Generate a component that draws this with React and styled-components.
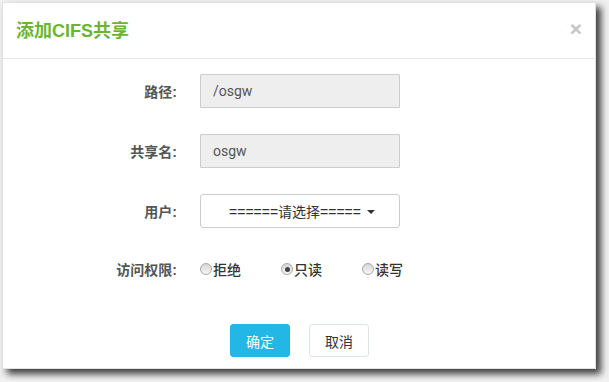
import React, { useState } from 'react';
import styled, { createGlobalStyle } from 'styled-components';

const GlobalStyle = createGlobalStyle`
  html, body {
    margin: 0;
    padding: 0;
    background: #f1f1f1;
    font-family: "Liberation Sans", "Noto Sans CJK SC", sans-serif;
  }
`;

const Page = styled.div`
  width: 609px;
  height: 382px;
  padding: 2px 0 0 2px;
  box-sizing: border-box;
  overflow: hidden;
`;

const Modal = styled.div`
  width: 594px;
  height: 367px;
  background: #fff;
  border: 1px solid #e2e2e2;
  box-sizing: border-box;
  box-shadow: 5px 5px 7px rgba(0, 0, 0, 0.75);
  display: flex;
  flex-direction: column;
`;

const Header = styled.div`
  height: 56px;
  border-bottom: 1px solid #e5e5e5;
  display: flex;
  align-items: center;
  justify-content: space-between;
  padding: 0 13px 0 13px;
  box-sizing: border-box;
`;

const Title = styled.h4`
  margin: 0;
  font-size: 18px;
  font-weight: 700;
  color: #6cb52f;
  line-height: 1;
`;

const Close = styled.button`
  border: none;
  background: none;
  padding: 0;
  font-size: 21px;
  font-weight: 700;
  line-height: 1;
  color: #c4c4c4;
  cursor: pointer;
  margin-top: -4px;
  font-family: "Liberation Sans", sans-serif;
`;

const Body = styled.div`
  padding-top: 15px;
  display: flex;
  flex-direction: column;
  gap: 26px;
`;

const Row = styled.div`
  display: grid;
  grid-template-columns: 174px max-content;
  column-gap: 23px;
  align-items: center;
  height: ${({ $h }) => $h || 34}px;
`;

const Label = styled.label`
  text-align: right;
  font-size: 14px;
  font-weight: 700;
  color: #555;
`;

const Input = styled.input`
  width: 200px;
  height: 34px;
  box-sizing: border-box;
  border: 1px solid #ccc;
  border-radius: 1px;
  background: #eee;
  padding: 0 12px;
  font-size: 14px;
  color: #555;
  font-family: "Roboto", "Liberation Sans", sans-serif;
  outline: none;
`;

const Select = styled.button`
  width: 200px;
  height: 34px;
  box-sizing: border-box;
  border: 1px solid #ccc;
  border-radius: 3px;
  background: #fff;
  font-size: 14px;
  color: #333;
  font-family: "Liberation Sans", "Noto Sans CJK SC", sans-serif;
  display: flex;
  align-items: center;
  justify-content: center;
  gap: 6px;
  padding: 0 0 0 4px;
  cursor: pointer;
`;

const Caret = styled.span`
  width: 0;
  height: 0;
  border-left: 4px solid transparent;
  border-right: 4px solid transparent;
  border-top: 4px solid #333;
  margin-top: 1px;
`;

const Radios = styled.div`
  display: flex;
  align-items: center;
`;

const RadioItem = styled.label`
  display: flex;
  align-items: center;
  flex: 0 0 auto;
  width: 81px;
  font-size: 14px;
  font-weight: 500;
  color: #333;
  cursor: pointer;
`;

const Circle = styled.span`
  width: 12px;
  height: 12px;
  border-radius: 50%;
  border: 1px solid #a9a9a9;
  background: linear-gradient(#d6d6d6, #f6f6f6);
  box-sizing: border-box;
  display: flex;
  align-items: center;
  justify-content: center;
  margin-right: 1px;

  &::after {
    content: '';
    width: 5px;
    height: 5px;
    border-radius: 50%;
    background: ${({ $on }) => ($on ? '#444' : 'transparent')};
  }
`;

const Footer = styled.div`
  display: flex;
  justify-content: center;
  gap: 19px;
  margin-top: 40px;
  padding-left: 1px;
`;

const Button = styled.button`
  width: 60px;
  height: 33px;
  box-sizing: border-box;
  border-radius: 3px;
  font-size: 14px;
  font-family: "Liberation Sans", "Noto Sans CJK SC", sans-serif;
  cursor: pointer;
  border: 1px solid ${({ $primary }) => ($primary ? '#23b7e5' : '#dee5e7')};
  background: ${({ $primary }) => ($primary ? '#23b7e5' : '#fff')};
  color: ${({ $primary }) => ($primary ? '#fff' : '#333')};
`;

const perms = ['拒绝', '只读', '读写'];

export default function App() {
  const [perm, setPerm] = useState(1);

  return (
    <Page>
      <GlobalStyle />
      <Modal>
        <Header>
          <Title>添加CIFS共享</Title>
          <Close>×</Close>
        </Header>
        <Body>
          <Row>
            <Label>路径:</Label>
            <Input value="/osgw" readOnly />
          </Row>
          <Row>
            <Label>共享名:</Label>
            <Input value="osgw" readOnly />
          </Row>
          <Row>
            <Label>用户:</Label>
            <Select>
              ======请选择=====
              <Caret />
            </Select>
          </Row>
          <Row $h={30}>
            <Label>访问权限:</Label>
            <Radios>
              {perms.map((p, i) => (
                <RadioItem key={p} onClick={() => setPerm(i)}>
                  <Circle $on={perm === i} />
                  {p}
                </RadioItem>
              ))}
            </Radios>
          </Row>
        </Body>
        <Footer>
          <Button $primary>确定</Button>
          <Button>取消</Button>
        </Footer>
      </Modal>
    </Page>
  );
}
